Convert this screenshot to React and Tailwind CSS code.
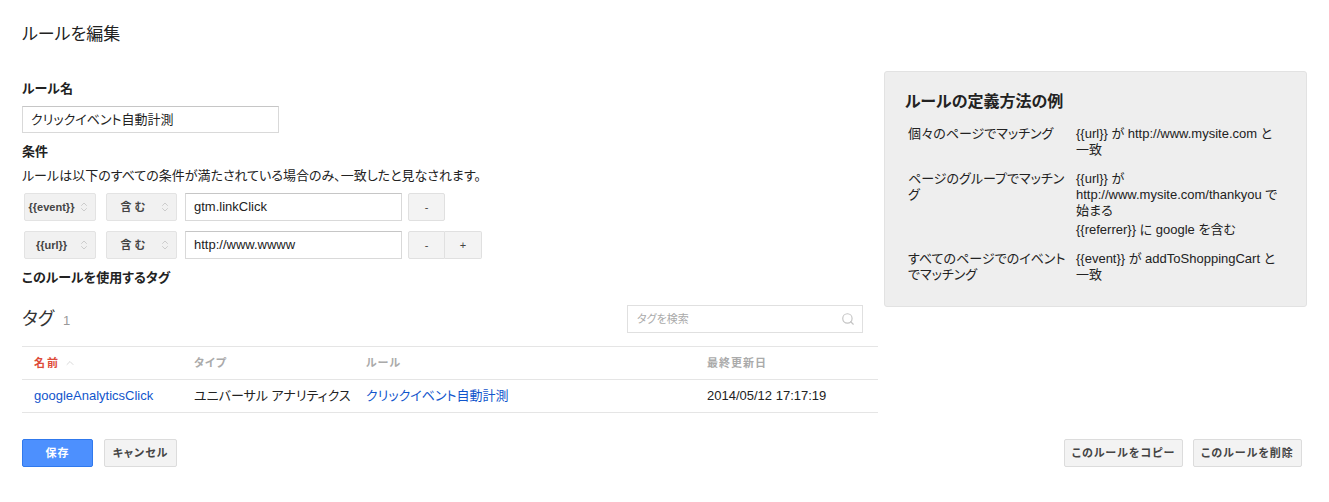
import React from 'react';
import { ChevronsUpDown, ChevronUp, Search } from 'lucide-react';

const FONT = { fontFamily: '"Liberation Sans", Arial, "Noto Sans CJK JP", sans-serif' };

const examples = [
  { label: '個々のページでマッチング', values: ['{{url}} が http://www.mysite.com と一致'] },
  {
    label: 'ページのグループでマッチング',
    values: ['{{url}} が http://www.mysite.com/thankyou で始まる', '{{referrer}} に google を含む']
  },
  { label: 'すべてのページでのイベントでマッチング', values: ['{{event}} が addToShoppingCart と一致'] }
];

function SelectBox({ label, width }) {
  return (
    <div
      className={`flex h-[28px] items-center rounded-[2px] border border-[#e3e3e3] bg-[#f1f1f1] pr-[5px] ${width}`}
    >
      <span className="flex-1 text-center text-[11px] font-bold text-[#444]">{label}</span>
      <ChevronsUpDown size={12} strokeWidth={1.25} className="text-[#b5b5b5]" />
    </div>
  );
}

function SmallButton({ children, className = '' }) {
  return (
    <div
      className={`flex h-[28px] w-[37px] items-center justify-center border border-[#e0e0e0] bg-[#f3f3f3] text-[11px] text-[#444] ${className}`}
    >
      {children}
    </div>
  );
}

function ConditionRow({ field, value, plus }) {
  return (
    <div className="flex items-center">
      <div className="ml-[2px]">
        <SelectBox label={field} width="w-[72px]" />
      </div>
      <div className="ml-[10px]">
        <SelectBox label="含 む" width="w-[71px]" />
      </div>
      <div className="ml-[8px] flex h-[28px] w-[217px] items-center border border-[#d9d9d9] border-t-[#c6c6c6] bg-white px-[8px] text-[13px] text-[#222]">
        {value}
      </div>
      <div className="ml-[6px] flex">
        <SmallButton className={plus ? 'rounded-l-[2px]' : 'rounded-[2px]'}>-</SmallButton>
        {plus && <SmallButton className="rounded-r-[2px] border-l-0">+</SmallButton>}
      </div>
    </div>
  );
}

export default function App() {
  return (
    <div
      className="min-h-[502px] bg-white px-[22px] pt-[25px] text-[#222] [font-feature-settings:'palt']"
      style={FONT}
    >
      <h1 className="text-[17px] leading-[20px] text-[#222]">ルールを編集</h1>

      <div className="mt-[26px] flex items-start">
        {/* Left column */}
        <div className="w-[856px] pt-[10px]">
          <div className="text-[13px] font-bold leading-[16px]">ルール名</div>
          <div className="mt-[9px] flex h-[27px] w-[257px] items-center border border-[#d9d9d9] border-t-[#c6c6c6] px-[8px] text-[13px]">
            クリックイベント自動計測
          </div>

          <div className="mt-[11px] text-[13px] font-bold leading-[16px]">条件</div>
          <div className="mt-[8px] text-[13px] leading-[16px]">
            ルールは以下のすべての条件が満たされている場合のみ、一致したと見なされます。
          </div>

          <div className="mt-[9px] flex flex-col gap-[10px]">
            <ConditionRow field="{{event}}" value="gtm.linkClick" />
            <ConditionRow field="{{url}}" value="http://www.wwww" plus />
          </div>

          <div className="mt-[11px] text-[13px] font-bold leading-[16px]">このルールを使用するタグ</div>

          <div className="mt-[19px] flex h-[28px] items-center justify-between">
            <div className="flex items-baseline">
              <span className="text-[18px] text-[#333]">タグ</span>
              <span className="ml-[9px] text-[13px] text-[#999]">1</span>
            </div>
            <div className="mr-[15px] flex h-[28px] w-[236px] items-center justify-between border border-[#e0e0e0] pl-[9px] pr-[7px]">
              <span className="text-[11px] text-[#aaa]">タグを検索</span>
              <Search size={14} strokeWidth={2} className="text-[#c4c4c4]" />
            </div>
          </div>

          <table className="mt-[13px] w-full table-fixed border-collapse">
            <colgroup>
              <col className="w-[160px]" />
              <col className="w-[172px]" />
              <col className="w-[341px]" />
              <col />
            </colgroup>
            <thead>
              <tr className="h-[33px] border-y border-[#e5e5e5] text-left text-[11px] font-bold">
                <th className="pl-[12px] font-bold text-[#dd4b39]">
                  <span className="inline-flex items-center tracking-[2px]">
                    名前
                    <ChevronUp size={12} strokeWidth={1.5} className="ml-[4px] text-[#ccc]" />
                  </span>
                </th>
                <th className="pl-[12px] font-bold tracking-[1px] text-[#aaa]">タイプ</th>
                <th className="pl-[12px] font-bold tracking-[1px] text-[#aaa]">ルール</th>
                <th className="pl-[12px] font-bold tracking-[1px] text-[#aaa]">最終更新日</th>
              </tr>
            </thead>
            <tbody>
              <tr className="h-[33px] border-b border-[#e5e5e5] text-[13px]">
                <td className="whitespace-nowrap pl-[12px] text-[#15c]">googleAnalyticsClick</td>
                <td className="whitespace-nowrap pl-[12px] text-[#222]">ユニバーサル アナリティクス</td>
                <td className="whitespace-nowrap pl-[12px] text-[#15c]">クリックイベント自動計測</td>
                <td className="whitespace-nowrap pl-[12px] text-[#222]">2014/05/12 17:17:19</td>
              </tr>
            </tbody>
          </table>
        </div>

        {/* Right panel */}
        <div className="ml-auto w-[423px] rounded-[3px] border border-[#e2e2e2] bg-[#eeeeee] pb-[23px] pl-[20px] pr-[20px] pt-[20px]">
          <h2 className="text-[16px] font-bold leading-[20px] text-[#222]">ルールの定義方法の例</h2>
          <div className="mt-[14px] flex flex-col gap-[13px] text-[13px] leading-[16px] text-[#222]">
            {examples.map((ex, idx) => (
              <div key={idx} className="flex">
                <div className="w-[171px] pl-[3px] pr-[4px]">{ex.label}</div>
                <div className="flex w-[207px] flex-col gap-[3px]">
                  {ex.values.map((v, i) => (
                    <div key={i}>{v}</div>
                  ))}
                </div>
              </div>
            ))}
          </div>
        </div>
      </div>

      {/* Bottom buttons */}
      <div className="mt-[26px] flex items-center justify-between">
        <div className="flex gap-[11px]">
          <div className="flex h-[28px] w-[71px] items-center justify-center rounded-[2px] border border-[#3079ed] bg-[#4d90fe] text-[11px] font-bold tracking-[1px] text-white">
            保存
          </div>
          <div className="flex h-[28px] w-[73px] items-center justify-center rounded-[2px] border border-[#dcdcdc] bg-[#f3f3f3] text-[11px] font-bold tracking-[1px] text-[#444]">
            キャンセル
          </div>
        </div>
        <div className="mr-[5px] flex gap-[10px]">
          <div className="flex h-[28px] w-[119px] items-center justify-center rounded-[2px] border border-[#dcdcdc] bg-[#f3f3f3] text-[11px] font-bold tracking-[1px] text-[#444]">
            このルールをコピー
          </div>
          <div className="flex h-[28px] w-[109px] items-center justify-center rounded-[2px] border border-[#dcdcdc] bg-[#f3f3f3] text-[11px] font-bold tracking-[1px] text-[#444]">
            このルールを削除
          </div>
        </div>
      </div>
    </div>
  );
}
